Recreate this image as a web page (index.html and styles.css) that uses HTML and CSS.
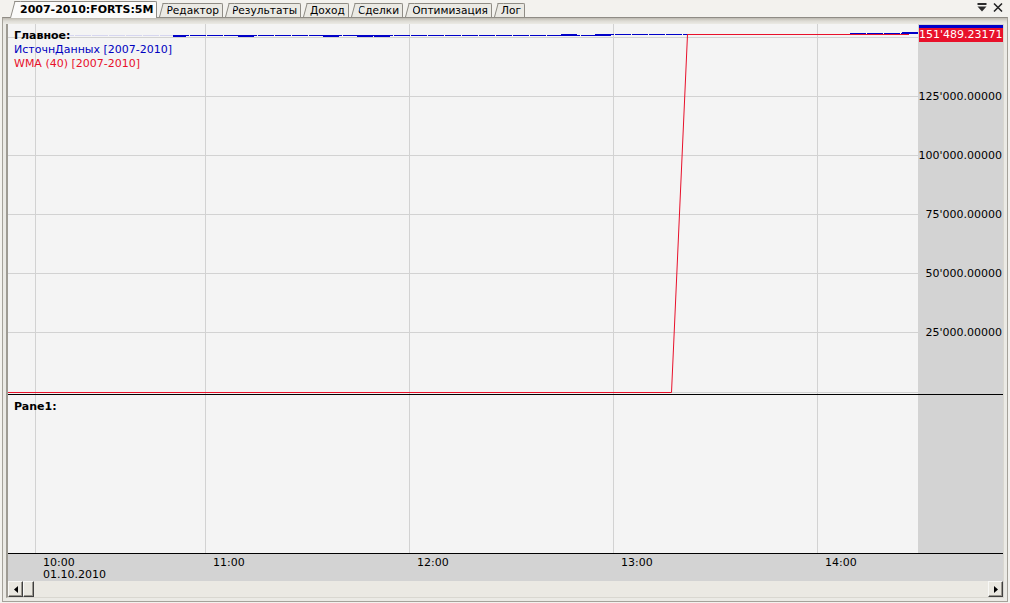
FILE: index.html
```html
<!DOCTYPE html>
<html lang="ru">
<head>
<meta charset="utf-8">
<title>2007-2010:FORTS:5M</title>
<link rel="stylesheet" href="styles.css">
</head>
<body>
<div class="tabbar">
  <div class="tabs">
    <div class="tab active">2007-2010:FORTS:5M</div>
    <div class="tab">Редактор</div>
    <div class="tab">Результаты</div>
    <div class="tab">Доход</div>
    <div class="tab">Сделки</div>
    <div class="tab">Оптимизация</div>
    <div class="tab">Лог</div>
  </div>
  <div class="win-buttons">
    <svg class="ico" width="10" height="9" viewBox="0 0 10 9"><rect x="0.5" y="0" width="9" height="2" fill="#2b2b2b"/><path d="M0.5 3.5 H9.5 L5 8.5 Z" fill="#2b2b2b"/></svg>
    <svg class="ico" width="10" height="9" viewBox="0 0 10 9"><path d="M1 0.5 L9 8.5 M9 0.5 L1 8.5" stroke="#222" stroke-width="1.5" fill="none"/></svg>
  </div>
</div>
<div class="frame">
  <div class="chart">
    <div class="pane main">
      <div class="plot">
        <svg class="layer" width="910" height="370" viewBox="0 0 910 370">
          <g stroke="#d2d2d2" stroke-width="1" fill="none">
            <path d="M27.5 0 V370 M197.5 0 V370 M401.5 0 V370 M605.5 0 V370 M809.5 0 V370"/>
            <path d="M0 13.5 H910 M0 72.5 H910 M0 131.5 H910 M0 190.5 H910 M0 249.5 H910 M0 308.5 H910 M0 368.5 H910"/>
          </g>
          <path d="M16 11.5 H165" stroke="#d6d6f0" stroke-width="1" stroke-dasharray="16 1" fill="none"/>
          <path d="M165 11.5 H590" stroke="#0000c8" stroke-width="1" stroke-dasharray="16 1" fill="none"/>
          <path d="M590 10.5 H842" stroke="#0000c8" stroke-width="1" stroke-dasharray="16 1" fill="none"/>
          <g fill="#0000c8">
            <rect x="165" y="11" width="13" height="2"/>
            <rect x="230" y="11" width="16" height="2"/>
            <rect x="315" y="11" width="16" height="2"/>
            <rect x="349" y="11" width="16" height="2"/>
            <rect x="366" y="11" width="16" height="2"/>
            <rect x="553" y="10" width="16" height="2"/>
            <rect x="587" y="10" width="16" height="2"/>
          </g>
          <path d="M0 368.5 H663.5 L679.5 10.5 H901" stroke="#e8102a" stroke-width="1" fill="none"/>
          <path d="M842 9.5 H894" stroke="#0000c8" stroke-width="1" stroke-dasharray="16 1" fill="none"/>
          <rect x="894" y="8" width="16" height="2" fill="#0000c8"/>
        </svg>
        <div class="legend">
          <div class="leg-title">Главное:</div>
          <div class="leg-blue">ИсточнДанных [2007-2010]</div>
          <div class="leg-red">WMA (40) [2007-2010]</div>
        </div>
      </div>
      <div class="axis">
        <div class="price-tag">151'489.23171</div>
        <div class="ticks">
          <div class="tick">125'000.00000</div>
          <div class="tick">100'000.00000</div>
          <div class="tick">75'000.00000</div>
          <div class="tick">50'000.00000</div>
          <div class="tick">25'000.00000</div>
        </div>
      </div>
    </div>
    <div class="pane sub">
      <div class="plot">
        <svg class="layer" width="910" height="158" viewBox="0 0 910 158">
          <path d="M27.5 0 V158 M197.5 0 V158 M401.5 0 V158 M605.5 0 V158 M809.5 0 V158" stroke="#d2d2d2" stroke-width="1" fill="none"/>
        </svg>
        <div class="legend sub-legend">
          <div class="leg-title">Pane1:</div>
        </div>
      </div>
      <div class="axis"></div>
    </div>
    <div class="timeaxis">
      <div class="tlabel first">10:00<br>01.10.2010</div>
      <div class="tlabel">11:00</div>
      <div class="tlabel">12:00</div>
      <div class="tlabel">13:00</div>
      <div class="tlabel">14:00</div>
    </div>
    <div class="scrollbar">
      <div class="sb-btn"><svg width="4" height="7" viewBox="0 0 4 7"><path d="M4 0 V7 L0 3.5 Z" fill="#000"/></svg></div>
      <div class="sb-thumb"></div>
      <div class="sb-track"></div>
      <div class="sb-btn"><svg width="4" height="7" viewBox="0 0 4 7"><path d="M0 0 V7 L4 3.5 Z" fill="#000"/></svg></div>
    </div>
  </div>
</div>
</body>
</html>
```

FILE: styles.css
```css
* {
  box-sizing: border-box;
}

body {
  margin: 0;
  width: 1010px;
  height: 603px;
  overflow: hidden;
  background: #f3f2ee;
  font-family: "DejaVu Sans", "Liberation Sans", sans-serif;
  font-size: 11px;
  color: #000;
}

/* ---------- tab strip ---------- */
.tabbar {
  height: 17px;
  display: flex;
  align-items: flex-end;
  justify-content: space-between;
  padding-left: 9px;
  padding-right: 7px;
}

.tabs {
  display: flex;
  align-items: flex-end;
  height: 100%;
}

.tab {
  position: relative;
  height: 14px;
  line-height: 13px;
  margin-left: 7px;
  padding: 0 3px 0 2px;
  background: #ebeae4;
  border-top: 1px solid #8f8c85;
  border-right: 1px solid #8f8c85;
  border-top-right-radius: 2px;
  white-space: nowrap;
  font-size: 10.6px;
}

.tab::before {
  content: "";
  position: absolute;
  left: -5px;
  top: -1px;
  bottom: 0;
  width: 5px;
  background: inherit;
  border-left: 1px solid #8f8c85;
  border-top: 1px solid #8f8c85;
  transform: skewX(-15deg);
  transform-origin: bottom left;
}

.tab.active {
  z-index: 2;
  height: 17px;
  line-height: 15px;
  margin-left: 6px;
  margin-bottom: -1px;
  padding: 0 3px 0 5px;
  background: #fbfbfa;
  font-weight: bold;
  font-size: 11px;
}

.win-buttons {
  display: flex;
  align-items: center;
  gap: 6px;
  height: 100%;
  padding-bottom: 3px;
}

.ico {
  display: block;
}

/* ---------- frame ---------- */
.frame {
  margin-left: 2px;
  width: 1006px;
  height: 585px;
  border: 1px solid #a5a29a;
  border-top-color: #8f8c85;
  padding: 6px 3px 3px 3px;
  background: linear-gradient(#bdbab1 0, #dedcd5 3px, #ebeae5 6px, #ebeae5 100%);
}

.chart {
  width: 998px;
  display: flex;
  flex-direction: column;
  border-left: 2px solid #9e9b93;
  border-right: 1px solid #d9d7d0;
  border-bottom: 1px solid #d9d7d0;
}

.pane {
  display: flex;
  border-bottom: 1px solid #000;
}

.pane.main {
  height: 371px;
}

.pane.sub {
  height: 159px;
}

.plot {
  position: relative;
  width: 910px;
  flex-shrink: 0;
  background: #f4f4f4;
}

.layer {
  position: absolute;
  left: 0;
  top: 0;
  display: block;
}

.legend {
  position: relative;
  padding: 5px 0 0 6px;
  line-height: 14px;
}

.sub-legend {
  padding-top: 5px;
}

.leg-title {
  font-weight: bold;
}

.leg-blue {
  color: #0000c0;
}

.leg-red {
  color: #e8102a;
}

.axis {
  width: 85px;
  flex-shrink: 0;
  background: #d3d3d3;
}

.price-tag {
  margin: 1px 0 0 1px;
  height: 17px;
  line-height: 14px;
  border-top: 3px solid #0000c8;
  background: #e8102a;
  color: #fff;
  text-align: right;
  padding-right: 1px;
  white-space: nowrap;
}

.ticks {
  margin-top: 24.5px;
}

.tick {
  height: 59px;
  line-height: 59px;
  text-align: right;
  padding-right: 1px;
  white-space: nowrap;
}

/* ---------- time axis ---------- */
.timeaxis {
  height: 27px;
  display: flex;
  overflow: hidden;
  background: #d3d3d3;
  padding: 3px 0 0 35px;
  line-height: 12px;
}

.tlabel {
  width: 204px;
  flex-shrink: 0;
  white-space: nowrap;
}

.tlabel.first {
  width: 170px;
}

/* ---------- scrollbar ---------- */
.scrollbar {
  height: 16px;
  display: flex;
  background: #ebe9e3;
}

.sb-btn,
.sb-thumb {
  height: 16px;
  flex-shrink: 0;
  background: #e9e7e0;
  border: 1px solid;
  border-color: #f8f8f6 #404040 #404040 #f8f8f6;
  box-shadow: inset -1px -1px 0 #9a978f;
}

.sb-btn {
  width: 15px;
  display: flex;
  align-items: center;
  justify-content: center;
}

.sb-btn svg {
  display: block;
}

.sb-thumb {
  width: 11px;
}

.sb-track {
  flex: 1;
}
```
